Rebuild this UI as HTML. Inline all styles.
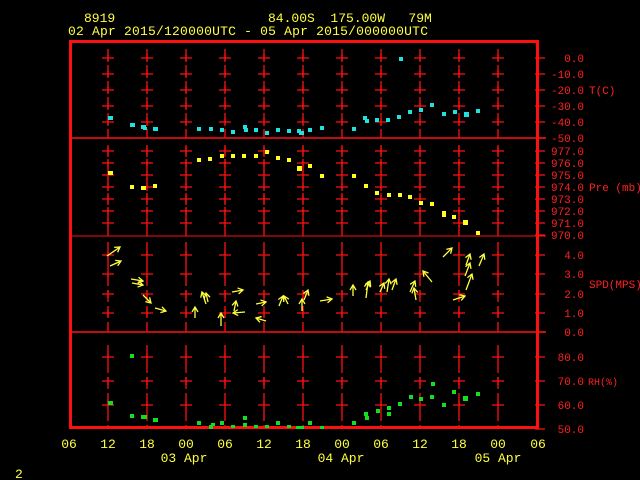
<!DOCTYPE html>
<html><head><meta charset="utf-8"><style>
html,body{margin:0;padding:0;background:#000;width:640px;height:480px;overflow:hidden}
svg{display:block}
text{font-family:"Liberation Mono",monospace;font-size:13px;white-space:pre}
.y{fill:#ffff40}.r{fill:#ff2020}
g.s text{font-size:11px}
g.s text.t{font-size:10px}
</style></head><body>
<svg width="640" height="480" viewBox="0 0 640 480" xmlns="http://www.w3.org/2000/svg" xml:space="preserve">
<defs>
<marker id="ah" markerWidth="8" markerHeight="8" refX="6" refY="4" orient="auto" markerUnits="userSpaceOnUse">
<path d="M1,1 L6,4 L1,7" fill="none" stroke="#ffff40" stroke-width="1.3"/>
</marker>
</defs>
<text x="84" y="22" class="y">8919</text>
<text x="268" y="22" class="y">84.00S  175.00W   79M</text>
<text x="68" y="35" class="y" textLength="360" lengthAdjust="spacing">02 Apr 2015/120000UTC - 05 Apr 2015/000000UTC</text>

<g stroke="#ff1010" fill="none">
<line x1="70" y1="138" x2="546" y2="138" stroke-width="1.5"/>
<line x1="70" y1="236" x2="546" y2="236" stroke-width="1"/>
<line x1="70" y1="332" x2="546" y2="332" stroke-width="1.5"/>
<g stroke-width="1.3" stroke-dasharray="12,4">
<path d="M108,49V138M147,49V138M186,49V138M225,49V138M264,49V138M303,49V138M342,49V138M381,49V138M420,49V138M459,49V138M498,49V138"/>
<path d="M108,145V236M147,145V236M186,145V236M225,145V236M264,145V236M303,145V236M342,145V236M381,145V236M420,145V236M459,145V236M498,145V236"/>
<path d="M108,242V332M147,242V332M186,242V332M225,242V332M264,242V332M303,242V332M342,242V332M381,242V332M420,242V332M459,242V332M498,242V332"/>
<path d="M108,345V428M147,345V428M186,345V428M225,345V428M264,345V428M303,345V428M342,345V428M381,345V428M420,345V428M459,345V428M498,345V428"/>
</g>
<rect x="70.5" y="41.5" width="467" height="386" stroke-width="3"/>
<path stroke-width="1.3" d="M535,58H545M535,74H545M535,90H545M535,106H545M535,122H545M535,138H545M535,151H545M535,163H545M535,175H545M535,187H545M535,199H545M535,211H545M535,223H545M535,235H545M535,255H545M535,274H545M535,294H545M535,313H545M535,332H545M535,357H545M535,381H545M535,405H545M535,429H545"/>
</g>
<g id="crosses" stroke="#ff1010" stroke-width="1.3"></g>
<script>
(function(){
var xs=[108,147,186,225,264,303,342,381,420,459,498];
var ys=[58,74,90,106,122,151,163,175,187,199,211,223,255,274,294,313,357,381,405];
var d="";
xs.forEach(function(x){ys.forEach(function(y){d+="M"+(x-6)+","+y+"H"+(x+6)+"M"+x+","+(y-4)+"V"+(y+4);});});
var p=document.createElementNS("http://www.w3.org/2000/svg","path");
p.setAttribute("d",d);p.setAttribute("fill","none");
document.getElementById("crosses").appendChild(p);
})();
</script>
<g class="r s" text-anchor="end">
<text x="584" y="62">0.0</text><text x="584" y="78">-10.0</text><text x="584" y="94">-20.0</text>
<text x="584" y="110">-30.0</text><text x="584" y="126">-40.0</text><text x="584" y="142">-50.0</text>
<text x="584" y="155">977.0</text><text x="584" y="167">976.0</text><text x="584" y="179">975.0</text>
<text x="584" y="191">974.0</text><text x="584" y="203">973.0</text><text x="584" y="215">972.0</text>
<text x="584" y="227">971.0</text><text x="584" y="239">970.0</text>
<text x="584" y="259">4.0</text><text x="584" y="278">3.0</text><text x="584" y="298">2.0</text>
<text x="584" y="317">1.0</text><text x="584" y="336">0.0</text>
<text x="584" y="361">80.0</text><text x="584" y="385">70.0</text><text x="584" y="409">60.0</text>
<text x="584" y="433">50.0</text>
</g>
<g class="r s">
<text x="589" y="94">T(C)</text><text x="589" y="191">Pre (mb)</text>
<text x="589" y="288">SPD(MPS)</text><text x="588" y="385" class="t">RH(%)</text>
</g>
<g class="y" text-anchor="middle">
<text x="69" y="448">06</text><text x="108" y="448">12</text><text x="147" y="448">18</text>
<text x="186" y="448">00</text><text x="225" y="448">06</text><text x="264" y="448">12</text>
<text x="303" y="448">18</text><text x="342" y="448">00</text><text x="381" y="448">06</text>
<text x="420" y="448">12</text><text x="459" y="448">18</text><text x="498" y="448">00</text>
<text x="538" y="448">06</text>
<text x="184" y="462">03 Apr</text><text x="341" y="462">04 Apr</text><text x="498" y="462">05 Apr</text>
</g>
<text x="15" y="478" class="y">2</text>
<g fill="#20e0e0">
<rect x="108" y="116" width="5" height="4"/><rect x="130" y="123" width="5" height="4"/><rect x="141" y="125" width="5" height="4"/><rect x="143" y="127" width="4" height="3"/><rect x="153" y="127" width="5" height="4"/>
<rect x="197" y="127" width="4" height="4"/><rect x="209" y="127" width="4" height="4"/><rect x="220" y="128" width="4" height="4"/><rect x="231" y="130" width="4" height="4"/><rect x="243" y="125" width="4" height="4"/><rect x="244" y="128" width="4" height="4"/><rect x="254" y="128" width="4" height="4"/><rect x="265" y="131" width="4" height="4"/><rect x="276" y="128" width="4" height="4"/><rect x="287" y="129" width="4" height="4"/><rect x="297" y="129" width="4" height="4"/><rect x="299" y="131" width="5" height="4"/><rect x="308" y="128" width="4" height="4"/><rect x="320" y="126" width="4" height="4"/>
<rect x="352" y="127" width="4" height="4"/><rect x="363" y="116" width="4" height="4"/><rect x="365" y="119" width="4" height="4"/><rect x="375" y="118" width="4" height="4"/><rect x="386" y="118" width="4" height="4"/><rect x="397" y="115" width="4" height="4"/><rect x="399" y="57" width="4" height="4"/><rect x="408" y="110" width="4" height="4"/><rect x="419" y="108" width="4" height="4"/><rect x="430" y="103" width="4" height="4"/>
<rect x="442" y="112" width="4" height="4"/><rect x="453" y="110" width="4" height="4"/><rect x="464" y="112" width="5" height="5"/><rect x="476" y="109" width="4" height="4"/>
</g>
<g fill="#ffff20">
<rect x="108" y="171" width="5" height="4"/><rect x="130" y="185" width="4" height="4"/><rect x="141" y="186" width="5" height="4"/><rect x="153" y="184" width="4" height="4"/>
<rect x="197" y="158" width="4" height="4"/><rect x="208" y="157" width="4" height="4"/><rect x="220" y="154" width="4" height="4"/><rect x="231" y="154" width="4" height="4"/><rect x="242" y="154" width="4" height="4"/><rect x="254" y="154" width="4" height="4"/><rect x="265" y="150" width="4" height="4"/><rect x="276" y="156" width="4" height="4"/><rect x="287" y="158" width="4" height="4"/><rect x="297" y="166" width="5" height="5"/><rect x="308" y="164" width="4" height="4"/><rect x="320" y="174" width="4" height="4"/>
<rect x="352" y="174" width="4" height="4"/><rect x="364" y="184" width="4" height="4"/><rect x="375" y="191" width="4" height="4"/><rect x="387" y="193" width="4" height="4"/><rect x="398" y="193" width="4" height="4"/><rect x="408" y="195" width="4" height="4"/><rect x="419" y="201" width="4" height="4"/><rect x="430" y="202" width="4" height="4"/><rect x="442" y="211" width="4" height="6"/><rect x="452" y="215" width="4" height="4"/><rect x="463" y="220" width="5" height="5"/><rect x="476" y="231" width="4" height="4"/>
</g>
<g fill="#10e020">
<rect x="108" y="401" width="5" height="4"/><rect x="130" y="354" width="4" height="4"/><rect x="130" y="414" width="4" height="4"/><rect x="141" y="415" width="6" height="4"/><rect x="153" y="418" width="5" height="4"/>
<rect x="197" y="421" width="4" height="4"/><rect x="209" y="425" width="4" height="4"/><rect x="211" y="423" width="4" height="3"/><rect x="220" y="421" width="4" height="4"/><rect x="231" y="425" width="4" height="3"/><rect x="243" y="416" width="4" height="4"/><rect x="243" y="423" width="4" height="4"/><rect x="254" y="425" width="4" height="3"/><rect x="265" y="425" width="4" height="3"/><rect x="276" y="421" width="4" height="4"/><rect x="287" y="425" width="4" height="3"/><rect x="296" y="426" width="8" height="3"/><rect x="308" y="421" width="4" height="4"/><rect x="320" y="426" width="4" height="3"/>
<rect x="352" y="421" width="4" height="4"/><rect x="364" y="412" width="4" height="4"/><rect x="365" y="416" width="4" height="4"/><rect x="376" y="409" width="4" height="4"/><rect x="387" y="406" width="4" height="4"/><rect x="387" y="412" width="4" height="4"/><rect x="398" y="402" width="4" height="4"/><rect x="409" y="395" width="4" height="4"/><rect x="419" y="397" width="4" height="4"/><rect x="430" y="395" width="4" height="4"/><rect x="431" y="382" width="4" height="4"/><rect x="442" y="403" width="4" height="4"/><rect x="452" y="390" width="4" height="4"/><rect x="463" y="396" width="5" height="5"/><rect x="476" y="392" width="4" height="4"/>
</g>
<g stroke="#ffff40" stroke-width="1.3" fill="none" marker-end="url(#ah)">
<line x1="107" y1="256" x2="120" y2="247"/><line x1="110" y1="266" x2="121" y2="261"/>
<line x1="131" y1="279" x2="143" y2="281"/><line x1="132" y1="283" x2="143" y2="285"/>
<line x1="143" y1="295" x2="151" y2="303"/><line x1="155" y1="308" x2="166" y2="311"/>
<line x1="195" y1="318" x2="195" y2="307"/><line x1="206" y1="304" x2="202" y2="292"/><line x1="208" y1="302" x2="206" y2="293"/>
<line x1="221" y1="326" x2="221" y2="313"/><line x1="232" y1="292" x2="243" y2="290"/>
<line x1="234" y1="311" x2="236" y2="301"/><line x1="245" y1="312" x2="233" y2="313"/>
<line x1="266" y1="321" x2="256" y2="318"/><line x1="256" y1="304" x2="266" y2="302"/>
<line x1="279" y1="306" x2="283" y2="296"/><line x1="288" y1="304" x2="284" y2="296"/>
<line x1="302" y1="311" x2="302" y2="299"/><line x1="304" y1="300" x2="308" y2="290"/>
<line x1="320" y1="301" x2="332" y2="299"/><line x1="353" y1="296" x2="353" y2="285"/>
<line x1="366" y1="298" x2="368" y2="282"/><line x1="366" y1="290" x2="370" y2="281"/>
<line x1="380" y1="292" x2="384" y2="283"/><line x1="387" y1="292" x2="389" y2="279"/>
<line x1="392" y1="290" x2="396" y2="279"/><line x1="416" y1="300" x2="414" y2="288"/>
<line x1="410" y1="292" x2="415" y2="281"/><line x1="432" y1="282" x2="423" y2="271"/>
<line x1="443" y1="257" x2="452" y2="248"/><line x1="453" y1="300" x2="465" y2="296"/>
<line x1="466" y1="265" x2="470" y2="254"/><line x1="465" y1="276" x2="470" y2="263"/>
<line x1="466" y1="290" x2="472" y2="274"/><line x1="479" y1="266" x2="484" y2="254"/>
</g>
</svg>
</body></html>
